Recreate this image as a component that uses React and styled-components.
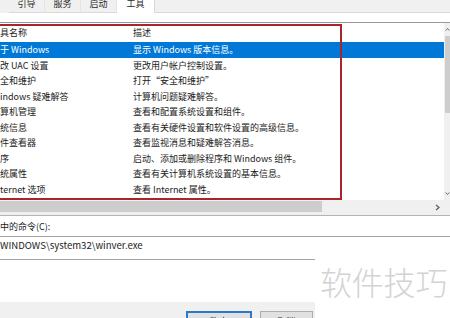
import React from 'react';
import styled, { createGlobalStyle } from 'styled-components';

const GlobalStyle = createGlobalStyle`
  html, body { margin: 0; padding: 0; background: #fff; }
  body { font-family: "Noto Sans CJK SC", "Noto Sans", sans-serif; }
  * { box-sizing: border-box; }
`;

const Window = styled.div`
  position: relative;
  width: 450px;
  height: 318px;
  overflow: hidden;
  background: #f0f0f0;
  display: flex;
  flex-direction: column;
  font-size: 9px;
  color: #1b1b1b;
`;

const TabStrip = styled.div`
  flex: none;
  height: 13px;
  display: flex;
  padding-left: 9px;
`;

const Tab = styled.div`
  width: ${p => (p.$active ? 38 : 36)}px;
  height: 14px;
  margin-top: -1px;
  text-align: center;
  line-height: 9px;
  color: #2b2b2b;
  background: ${p => (p.$active ? '#ffffff' : '#f0f0f0')};
  border-right: 1px solid ${p => (p.$active ? '#d9d9d9' : '#e4e4e4')};
  border-bottom: ${p => (p.$active ? 'none' : '1px solid #d9d9d9')};
`;

const TabFiller = styled.div`
  flex: 1;
  border-bottom: 1px solid #d9d9d9;
`;

const Panel = styled.div`
  flex: 1;
  background: #ffffff;
  display: flex;
  flex-direction: column;
  padding-top: 9px;
`;

const ListBox = styled.div`
  flex: none;
  border-top: 1px solid #9a9a9a;
  border-bottom: 1px solid #b4b4b4;
  display: grid;
  grid-template-columns: 444px 6px;
  grid-template-rows: 177px 15px;
`;

const ListArea = styled.div`
  overflow: hidden;
  display: flex;
  flex-direction: column;
`;

const Row = styled.div`
  flex: none;
  height: ${p => (p.$header ? 19 : 15.5)}px;
  display: grid;
  grid-template-columns: 133px 1fr;
  align-items: center;
  white-space: nowrap;
  background: ${p => (p.$selected ? '#0078d7' : 'transparent')};
  color: ${p => (p.$selected ? '#ffffff' : '#1b1b1b')};
  line-height: 1;
`;

const Cell = styled.span`
  overflow: hidden;
`;

const VScroll = styled.div`
  background: #f0f0f0;
  display: flex;
  flex-direction: column;
  overflow: hidden;
`;

const ArrowBox = styled.div`
  flex: none;
  height: 13px;
  display: flex;
  align-items: center;
  padding-left: 1px;
  color: #5a5a5a;
`;

const VThumb = styled.div`
  flex: none;
  height: 77px;
  background: #cdcdcd;
  margin-left: 1px;
`;

const Track = styled.div`
  flex: 1;
`;

const HScroll = styled.div`
  background: #f0f0f0;
  display: flex;
  align-items: stretch;
`;

const HThumb = styled.div`
  flex: none;
  width: 322px;
  background: #cdcdcd;
  margin: 1px 0 3px 0;
`;

const HArrow = styled.div`
  flex: none;
  width: 14px;
  display: flex;
  align-items: center;
  justify-content: center;
  color: #5a5a5a;
`;

const Corner = styled.div`
  background: #f0f0f0;
`;

const FieldLabel = styled.div`
  flex: none;
  height: 20px;
  line-height: 20px;
  padding-top: 1px;
  white-space: nowrap;
`;

const CommandBox = styled.div`
  flex: none;
  height: 24px;
  border-top: 1px solid #a3a3a3;
  border-bottom: 1px solid #a3a3a3;
  line-height: 16px;
  font-size: 9.6px;
  white-space: nowrap;
`;

const Spacer = styled.div`
  flex: 1;
`;

const ButtonBar = styled.div`
  flex: none;
  height: 16px;
  background: #f0f0f0;
  display: flex;
  gap: 8px;
  padding-left: 186px;
  padding-top: 9px;
  overflow: hidden;
`;

const DialogButton = styled.div`
  flex: none;
  width: ${p => p.$w}px;
  height: 22px;
  background: #e1e1e1;
  border: ${p => (p.$primary ? '2px solid #2a7ac8' : '1px solid #adadad')};
  text-align: center;
  line-height: 9px;
  padding-top: ${p => (p.$primary ? 4 : 5)}px;
  color: #1b1b1b;
`;

const Highlight = styled.div`
  position: absolute;
  left: -4px;
  top: 24px;
  width: 346px;
  height: 176px;
  border: 2px solid #a8252c;
  pointer-events: none;
`;

const Watermark = styled.div`
  position: absolute;
  left: 315px;
  top: 259px;
  right: 0;
  bottom: 0;
  background: #ffffff;
  color: #d3d3d3;
  font-size: 32px;
  font-weight: 300;
  line-height: 32px;
  padding: 6px 0 0 5px;
  white-space: nowrap;
  letter-spacing: -0.2px;
`;

const Chevron = ({ dir }) => {
  const paths = {
    up: 'M1 5 L3.5 2 L6 5',
    down: 'M1 2 L3.5 5 L6 2',
    right: 'M2 1 L5 3.5 L2 6',
  };
  return (
    <svg width="7" height="7" viewBox="0 0 7 7">
      <path d={paths[dir]} fill="none" stroke="currentColor" strokeWidth="1.2" />
    </svg>
  );
};

const tabs = ['引导', '服务', '启动', '工具'];

const rows = [
  ['于 Windows', '显示 Windows 版本信息。'],
  ['改 UAC 设置', '更改用户帐户控制设置。'],
  ['全和维护', '打开“安全和维护”'],
  ['indows 疑难解答', '计算机问题疑难解答。'],
  ['算机管理', '查看和配置系统设置和组件。'],
  ['统信息', '查看有关硬件设置和软件设置的高级信息。'],
  ['件查看器', '查看监视消息和疑难解答消息。'],
  ['序', '启动、添加或删除程序和 Windows 组件。'],
  ['统属性', '查看有关计算机系统设置的基本信息。'],
  ['ternet 选项', '查看 Internet 属性。'],
];

export default function App() {
  return (
    <>
      <GlobalStyle />
      <Window>
        <TabStrip>
          {tabs.map((t, i) => (
            <Tab key={t} $active={i === 3}>{t}</Tab>
          ))}
          <TabFiller />
        </TabStrip>
        <Panel>
          <ListBox>
            <ListArea>
              <Row $header>
                <Cell>具名称</Cell>
                <Cell>描述</Cell>
              </Row>
              {rows.map((r, i) => (
                <Row key={i} $selected={i === 0}>
                  <Cell>{r[0]}</Cell>
                  <Cell>{r[1]}</Cell>
                </Row>
              ))}
            </ListArea>
            <VScroll>
              <ArrowBox><Chevron dir="up" /></ArrowBox>
              <VThumb />
              <Track />
              <ArrowBox><Chevron dir="down" /></ArrowBox>
            </VScroll>
            <HScroll>
              <HThumb />
              <Track />
              <HArrow><Chevron dir="right" /></HArrow>
            </HScroll>
            <Corner />
          </ListBox>
          <FieldLabel>中的命令(C):</FieldLabel>
          <CommandBox>WINDOWS\system32\winver.exe</CommandBox>
          <Spacer />
        </Panel>
        <ButtonBar>
          <DialogButton $primary $w={66}>确定</DialogButton>
          <DialogButton $w={53}>取消</DialogButton>
        </ButtonBar>
        <Highlight />
        <Watermark>软件技巧</Watermark>
      </Window>
    </>
  );
}
